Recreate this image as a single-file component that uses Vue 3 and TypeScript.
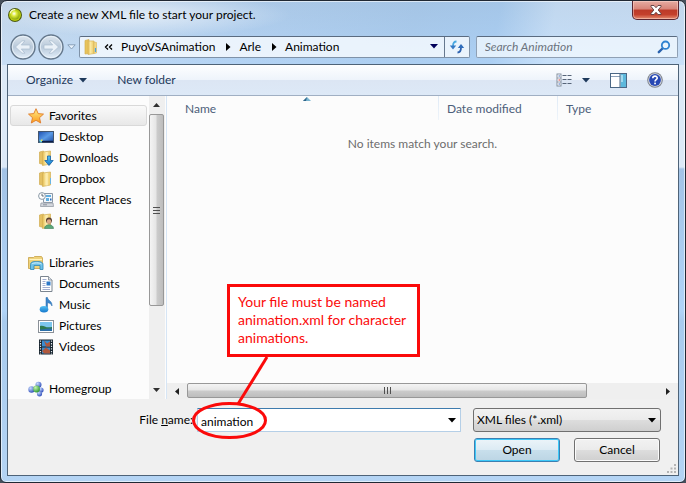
<script setup lang="ts">
import { ref } from 'vue'

interface NavItem {
  label: string
  icon: string
}
interface NavGroup extends NavItem {
  selected?: boolean
  items: NavItem[]
}

const groups: NavGroup[] = [
  {
    label: 'Favorites',
    icon: 'star',
    selected: true,
    items: [
      { label: 'Desktop', icon: 'desktop' },
      { label: 'Downloads', icon: 'downloads' },
      { label: 'Dropbox', icon: 'folder' },
      { label: 'Recent Places', icon: 'recent' },
      { label: 'Hernan', icon: 'user' },
    ],
  },
  {
    label: 'Libraries',
    icon: 'libraries',
    items: [
      { label: 'Documents', icon: 'document' },
      { label: 'Music', icon: 'music' },
      { label: 'Pictures', icon: 'picture' },
      { label: 'Videos', icon: 'video' },
    ],
  },
  { label: 'Homegroup', icon: 'homegroup', items: [] },
]

const path = ['PuyoVSAnimation', 'Arle', 'Animation']
const fileName = ref('animation')
const search = ref('')
const fileType = ref('xml')
</script>

<template>
  <div class="window">
    <svg class="defs" width="0" height="0" aria-hidden="true">
      <defs>
        <linearGradient id="gold" x1="0" x2="1">
          <stop offset="0" stop-color="#e3b94c" />
          <stop offset="0.4" stop-color="#fbe9a4" />
          <stop offset="1" stop-color="#ecc964" />
        </linearGradient>
        <linearGradient id="screen" x1="0" y1="0" x2="1" y2="1">
          <stop offset="0" stop-color="#1d4fb0" />
          <stop offset="0.5" stop-color="#5b9be6" />
          <stop offset="1" stop-color="#1a48a0" />
        </linearGradient>
        <linearGradient id="blue" x1="0" y1="0" x2="0" y2="1">
          <stop offset="0" stop-color="#52c0f4" />
          <stop offset="1" stop-color="#1678cc" />
        </linearGradient>
        <linearGradient id="starfill" x1="0" y1="0" x2="0" y2="1">
          <stop offset="0" stop-color="#fff08a" />
          <stop offset="1" stop-color="#fb9a1c" />
        </linearGradient>
        <radialGradient id="orb" cx="0.4" cy="0.35" r="0.8">
          <stop offset="0" stop-color="#ffffff" />
          <stop offset="0.35" stop-color="#dcea3a" />
          <stop offset="1" stop-color="#6c8a00" />
        </radialGradient>
        <radialGradient id="ballblue" cx="0.35" cy="0.3" r="0.8">
          <stop offset="0" stop-color="#c8dcff" />
          <stop offset="1" stop-color="#2342b4" />
        </radialGradient>
        <radialGradient id="ballgreen" cx="0.35" cy="0.3" r="0.8">
          <stop offset="0" stop-color="#c4f6b0" />
          <stop offset="1" stop-color="#1f8f28" />
        </radialGradient>
        <linearGradient id="glass" x1="0" y1="0" x2="0" y2="1">
          <stop offset="0" stop-color="#dfe7ef" />
          <stop offset="0.5" stop-color="#b9c9da" />
          <stop offset="1" stop-color="#e4f0fb" />
        </linearGradient>
      </defs>
    </svg>

    <header class="titlebar">
      <svg class="app-icon" width="16" height="16" viewBox="0 0 16 16">
        <circle cx="8" cy="8" r="7" fill="#4c5a10" />
        <circle cx="8" cy="8" r="6" fill="#b8cc10" />
        <circle cx="8" cy="8" r="4.6" fill="url(#orb)" />
        <path d="M3.2 6.4a5 5 0 0 1 5-3.7" fill="none" stroke="#f6fbd0" stroke-width="1.3" />
      </svg>
      <h1 class="title">Create a new XML file to start your project.</h1>
      <button class="close" type="button" aria-label="Close">
        <svg width="12" height="10" viewBox="0 0 12 10">
          <path d="M1 .5h3L6 2.700 8 .5h3v1L8.200 5 11 8.500v1H8L6 7.300 4 9.500H1v-1L3.800 5 1 1.500z" fill="#fff" stroke="#5a3a3c" stroke-width="0.9" />
        </svg>
      </button>
    </header>

    <nav class="addressrow" aria-label="Location">
      <div class="history">
        <button class="round" type="button" aria-label="Back">
          <svg width="26" height="26" viewBox="0 0 26 26">
            <circle cx="13" cy="13" r="12" fill="url(#glass)" stroke="#65788c" stroke-width="1.4" />
            <circle cx="13" cy="13" r="10.7" fill="none" stroke="#eef5fb" stroke-opacity="0.8" />
            <path d="M5.500 13 12 6.800h3L11.300 11H20v4h-8.700l3.700 4.200h-3z" fill="#eaf1f8" stroke="#a9bccf" stroke-width="0.7" />
          </svg>
        </button>
        <button class="round" type="button" aria-label="Forward">
          <svg width="26" height="26" viewBox="0 0 26 26">
            <circle cx="13" cy="13" r="12" fill="url(#glass)" stroke="#65788c" stroke-width="1.4" />
            <circle cx="13" cy="13" r="10.7" fill="none" stroke="#eef5fb" stroke-opacity="0.8" />
            <path d="M20.500 13 14 6.800h-3l3.700 4.200H6v4h8.700L11 19.200h3z" fill="#eaf1f8" stroke="#a9bccf" stroke-width="0.7" />
          </svg>
        </button>
        <button class="recent" type="button" aria-label="Recent locations">
          <svg width="9" height="6" viewBox="0 0 9 6"><path d="M.8.8h7.400L4.500 5z" fill="#e8f2fc" stroke="#8198b2" stroke-width="0.9" /></svg>
        </button>
      </div>
      <div class="address">
        <svg width="16" height="16" viewBox="0 0 16 16">
          <path d="M2 1.500 6 .5v14l-4 .5z" fill="#e8c35a" stroke="#d4b052" stroke-width="0.7" />
          <path d="M5 2h6v12.500l-6 1z" fill="url(#gold)" stroke="#d8b65c" stroke-width="0.7" />
          <path d="M11 3l2.500.5V14L11 14.500z" fill="#f2d783" stroke="#d8b65c" stroke-width="0.6" />
          <path d="M12.500 9v4" stroke="#4aa0e0" stroke-width="1.2" />
        </svg>
        <svg class="chevrons" width="9" height="6" viewBox="0 0 9 6"><path d="M4 .5 1.500 3 4 5.500M8 .5 5.500 3 8 5.500" fill="none" stroke="#000" stroke-width="1.3" /></svg>
        <template v-for="(part, i) in path" :key="part">
          <svg v-if="i > 0" class="sep" width="5" height="8" viewBox="0 0 5 8"><path d="M0 0l4.500 4L0 8z" fill="#000" /></svg>
          <a class="crumb" href="#">{{ part }}</a>
        </template>
        <button class="plain drop" type="button" aria-label="Previous locations">
          <svg width="8" height="5" viewBox="0 0 8 5"><path d="M0 0h8L4 4.500z" fill="#00005a" /></svg>
        </button>
        <button class="plain refresh" type="button" aria-label="Refresh">
          <svg width="16" height="16" viewBox="0 0 16 16">
            <path d="M7.500 2.500C5 2.500 4 4 4 7.500" fill="none" stroke="#48a8e0" stroke-width="1.8" />
            <path d="M.8 6.500h6.400L4 10.500z" fill="#3579c4" />
            <path d="M8.500 13.500c2.500 0 3.500-1.500 3.500-5" fill="none" stroke="#2d62b0" stroke-width="1.8" />
            <path d="M8.800 9h6.400L12 5z" fill="#2f6dbb" />
          </svg>
        </button>
      </div>
      <div class="search">
        <input v-model="search" type="text" placeholder="Search Animation" aria-label="Search Animation" />
        <svg width="14" height="14" viewBox="0 0 14 14">
          <path d="M6 8 1.800 12.200" stroke="#2a62ae" stroke-width="2.4" stroke-linecap="round" />
          <circle cx="8.500" cy="5.200" r="3.700" fill="#eaf4fc" stroke="#2f82d0" stroke-width="1.8" />
        </svg>
      </div>
    </nav>

    <main class="client">
      <div class="toolbar">
        <button class="tool" type="button">
          Organize
          <svg width="8" height="5" viewBox="0 0 8 5"><path d="M0 0h8L4 4.500z" fill="#1e395b" /></svg>
        </button>
        <button class="tool" type="button">New folder</button>
        <span class="spacer"></span>
        <button class="plain views" type="button" aria-label="Change your view">
          <svg width="16" height="14" viewBox="0 0 16 14">
            <rect x="1" y="1" width="4" height="12" fill="#fff" stroke="#7b8899" stroke-width="0.9" />
            <path d="M1 5h4M1 9h4" stroke="#7b8899" stroke-width="0.8" />
            <path d="M2.500 3h1.500M2.500 11h1.500" stroke="#3d6ac0" stroke-width="1.2" />
            <path d="M2.500 7h1.500" stroke="#d03030" stroke-width="1.2" />
            <path d="M6.500 2.500h4M11.500 2.500h4M6.500 6.500h4M11.500 6.500h4M6.500 10.500h4M11.500 10.500h4" stroke="#566478" />
          </svg>
          <svg width="8" height="5" viewBox="0 0 8 5"><path d="M0 0h8L4 4.500z" fill="#1e395b" /></svg>
        </button>
        <button class="plain" type="button" aria-label="Show the preview pane">
          <svg width="17" height="15" viewBox="0 0 17 15">
            <rect x=".5" y=".5" width="16" height="14" fill="#fff" stroke="#4b6785" />
            <path d="M1 3.500h9" stroke="#8ba0b8" />
            <rect x="10.500" y="1" width="5.500" height="13" fill="#5cb8dc" />
            <path d="M10 1v13" stroke="#4b6785" />
            <path d="M12 2v7" stroke="#b8e6f6" stroke-width="1.5" />
          </svg>
        </button>
        <button class="plain" type="button" aria-label="Get help">
          <svg width="16" height="16" viewBox="0 0 16 16">
            <circle cx="8" cy="8" r="7.800" fill="#7d828c" />
            <circle cx="8" cy="8" r="6.800" fill="#d5d9e2" />
            <circle cx="8" cy="8" r="5.900" fill="#2748b4" />
            <path d="M5.800 6.200C5.800 3.400 10.300 3.500 10.200 6.100 10.100 7.700 8 7.700 8 9.500" fill="none" stroke="#fff" stroke-width="1.6" />
            <rect x="7.200" y="10.600" width="1.700" height="1.700" fill="#fff" />
          </svg>
        </button>
      </div>

      <div class="panes">
        <aside class="navpane">
          <section v-for="g in groups" :key="g.label" class="group">
            <template v-for="(item, i) in [g, ...g.items]" :key="item.label">
              <a href="#" class="node" :class="{ child: i > 0, selected: i === 0 && g.selected }">
                <svg width="16" height="16" viewBox="0 0 16 16">
                  <path v-if="item.icon === 'star'" d="M8 .7l2.200 4.900 5.300.5-4 3.600 1.200 5.300L8 12.300 3.300 15l1.200-5.300-4-3.600 5.300-.5z" fill="url(#starfill)" stroke="#e07a28" stroke-width="0.9" />
                  <g v-else-if="item.icon === 'desktop'">
                    <rect x="0.500" y="2.500" width="15" height="11" fill="url(#screen)" stroke="#44566e" />
                    <path d="M1 12.500h14" stroke="#0c1e48" stroke-width="1.5" />
                    <path d="M1.500 11h2.500v2.500H1.500z" fill="#6ad0d8" />
                    <path d="M3 10.500h1.500v1.500H3z" fill="#e8e050" />
                  </g>
                  <g v-else-if="item.icon === 'downloads' || item.icon === 'folder' || item.icon === 'user'">
                    <path d="M1.500 2 5.500 1v13.500l-4-1z" fill="#e4c062" stroke="#d0ac50" stroke-width="0.7" />
                    <path d="M4.500 2 12.500 1v13l-8 1.500z" fill="url(#gold)" stroke="#d2b058" stroke-width="0.7" />
                    <path d="M9 2v12.500" stroke="#fff4c4" />
                    <path v-if="item.icon === 'folder'" d="M12.500 7v6" stroke="#6ab4e4" />
                    <path v-if="item.icon === 'downloads'" d="M9.500 6h3v4.500h2.700L11 15.500 6.800 10.500h2.700z" fill="url(#blue)" stroke="#1562a8" stroke-width="0.8" />
                    <g v-if="item.icon === 'user'">
                      <path d="M6.500 15.500c0-5 9-5 9 0z" fill="#5ba878" stroke="#3a7a58" stroke-width="0.6" />
                      <circle cx="11" cy="7.500" r="3" fill="#5a4030" />
                      <circle cx="11" cy="8.500" r="2.200" fill="#dca888" />
                    </g>
                  </g>
                  <g v-else-if="item.icon === 'recent'">
                    <path d="M5.500 1.500h9v9h-9z" fill="#f2f7fc" stroke="#8c98a6" />
                    <path d="M8 3h5v2H8zM8 6h3v3H8z" fill="#62aee0" />
                    <path d="M12 6.500h1.500v2H12z" fill="#2c6cb8" />
                    <path d="M3 11h12l.5 3.500h-13z" fill="#d2d6dc" stroke="#959ca6" stroke-width="0.8" />
                    <path d="M5 12.800h4" stroke="#7a828e" stroke-width="0.8" />
                    <circle cx="4" cy="4" r="3.400" fill="#fff" stroke="#7d8d9c" stroke-width="0.9" />
                    <path d="M4 1.800V4h1.800" fill="none" stroke="#3c4a58" stroke-width="0.8" />
                  </g>
                  <g v-else-if="item.icon === 'libraries'">
                    <path d="M.5 2.500h5l1-1h7l1 1.500v10.500H.5z" fill="#efd27a" stroke="#c8a246" stroke-width="0.8" />
                    <path d="M1.500 4.500h12.500" stroke="#fff3bc" />
                    <path d="M2.500 14.500V9.500C2.500 7 5 6.500 8.500 6.500s6.500.5 6.500 3v5h-3v-4H6v4z" fill="#6fc2e8" stroke="#2c86b8" stroke-width="0.8" />
                    <path d="M4 9c1-1.500 8-1.500 9.500 0" fill="none" stroke="#d8f4ff" />
                  </g>
                  <g v-else-if="item.icon === 'document'">
                    <path d="M2.500.5h8l3.500 3.500v11.500H2.500z" fill="#fff" stroke="#7b8590" />
                    <path d="M10.500.5V4H14" fill="#dde4ec" stroke="#7b8590" stroke-width="0.8" />
                    <path d="M4.500 3.500h4M4.500 5.500h3M4.500 7.500h3M4.500 9.500h3M4.500 11.500h7.500M4.500 13.500h7.500" stroke="#a2aed0" />
                    <rect x="8.500" y="5.500" width="4" height="4" fill="#2c78c8" />
                  </g>
                  <g v-else-if="item.icon === 'music'">
                    <path d="M8 .5h1.500c.3 3 5 3.500 4.500 8.500-1-2.500-2.500-3-4.500-3.200V12H8z" fill="#3a86cc" stroke="#2466a8" stroke-width="0.5" />
                    <ellipse cx="6" cy="12.300" rx="4.300" ry="3.200" fill="url(#blue)" />
                  </g>
                  <g v-else-if="item.icon === 'picture'">
                    <rect x=".5" y="2.500" width="15" height="12" fill="#fff" stroke="#8a9098" />
                    <rect x="2" y="4" width="12" height="9" fill="#7cc6ee" />
                    <path d="M2 8c4-1.500 5 2.500 12 1v4H2z" fill="#2c7a50" />
                    <path d="M2 11.500c5-.5 8-1 12-1v2.500H2z" fill="#2a6ea8" />
                  </g>
                  <g v-else-if="item.icon === 'video'">
                    <rect x="1" y=".5" width="14" height="15" fill="#18242e" />
                    <path d="M2.500 1.500v14M13.500 1.500v14" stroke="#e0e8ee" stroke-width="1.2" stroke-dasharray="1.3 1.3" />
                    <rect x="4" y="1.500" width="8" height="6" fill="#3a8cd0" />
                    <rect x="4" y="8.500" width="8" height="6" fill="#3a8cd0" />
                    <path d="M6 1.500l3 3 3-2v5H8zM4 12l4-3.500 4 3v3H6z" fill="#b0583c" />
                  </g>
                  <g v-else>
                    <circle cx="10.500" cy="3.800" r="3" fill="url(#ballblue)" />
                    <circle cx="3.500" cy="8.500" r="3.200" fill="url(#ballblue)" />
                    <circle cx="13" cy="9" r="2.600" fill="url(#ballblue)" />
                    <circle cx="11.500" cy="12.800" r="2.600" fill="url(#ballblue)" />
                    <circle cx="8.500" cy="8" r="3.400" fill="url(#ballgreen)" />
                  </g>
                </svg>
                <span>{{ item.label }}</span>
              </a>
            </template>
          </section>
        </aside>

        <div class="vscroll" aria-hidden="true">
          <span class="arrow"><svg width="7" height="4" viewBox="0 0 7 4"><path d="M3.500 0 7 4H0z" fill="#303030" /></svg></span>
          <div class="vthumb"><i></i><i></i><i></i></div>
          <span class="arrow"><svg width="7" height="4" viewBox="0 0 7 4"><path d="M3.500 4 7 0H0z" fill="#303030" /></svg></span>
        </div>

        <section class="listpane">
          <table class="files">
            <thead>
              <tr>
                <th class="col-name" aria-sort="ascending">
                  Name
                  <svg class="sort" width="8" height="4" viewBox="0 0 8 4"><path d="M4 0l4 4H0z" fill="#79b4d0" /><path d="M4 0L0 4h3z" fill="#2f6488" /></svg>
                </th>
                <th class="col-date">Date modified</th>
                <th>Type</th>
              </tr>
            </thead>
            <tbody>
              <tr><td colspan="3">No items match your search.</td></tr>
            </tbody>
          </table>
          <div class="hscroll" aria-hidden="true">
            <span class="arrow"><svg width="4" height="7" viewBox="0 0 4 7"><path d="M0 3.500 4 0v7z" fill="#202020" /></svg></span>
            <div class="track"><div class="hthumb"><i></i><i></i><i></i></div></div>
            <span class="arrow"><svg width="4" height="7" viewBox="0 0 4 7"><path d="M4 3.500 0 0v7z" fill="#202020" /></svg></span>
          </div>
        </section>
      </div>

      <form class="footer" @submit.prevent>
        <div class="filerow">
          <label class="filelabel" for="filename">File <u>n</u>ame:</label>
          <div class="filefield">
            <input id="filename" v-model="fileName" type="text" autocomplete="off" />
            <svg class="combo" width="8" height="5" viewBox="0 0 8 5"><path d="M0 0h8L4 4.500z" fill="#000" /></svg>
            <p class="note">Your file must be named animation.xml for character animations.</p>
            <svg class="marker" width="84" height="86" viewBox="0 0 84 86">
              <path d="M75 3 46 50" stroke="#fb0a0a" stroke-width="3" />
              <ellipse cx="37.500" cy="66.500" rx="36" ry="17" fill="none" stroke="#fb0a0a" stroke-width="3" />
            </svg>
          </div>
          <div class="typefield">
            <select v-model="fileType" aria-label="File type">
              <option value="xml">XML files (*.xml)</option>
            </select>
            <svg class="combo" width="8" height="5" viewBox="0 0 8 5"><path d="M0 0h8L4 4.500z" fill="#000" /></svg>
          </div>
        </div>
        <div class="actions">
          <button class="push primary" type="submit">Open</button>
          <button class="push" type="button">Cancel</button>
        </div>
        <svg class="grip" width="10" height="10" viewBox="0 0 10 10" aria-hidden="true">
          <path d="M7 1h2M7 4.500h2M7 8h2M3.500 4.500h2M3.500 8h2M0 8h2" stroke="#b4b4b4" stroke-width="2" />
        </svg>
      </form>
    </main>
  </div>
</template>

<style>
body {
  margin: 0;
  background: #47505c;
}
</style>

<style scoped>
* {
  box-sizing: border-box;
}
.window {
  display: flex;
  flex-direction: column;
  min-height: 100vh;
  padding: 0 6px 6px;
  border: 1px solid #202833;
  border-radius: 7px 7px 6px 6px;
  font: 12px/16px Lato, "Open Sans", sans-serif;
  color: #000;
  background:
    radial-gradient(ellipse 150px 22px at 140px 14px, rgba(255, 255, 255, 0.6), transparent),
    linear-gradient(180deg, rgba(150, 175, 200, 0.25), rgba(180, 215, 250, 0.3)) 0 0 / 100% 64px no-repeat,
    linear-gradient(100deg, #d2e2f3, #b4d2f2 34%, #a9cbee 60%, #a9cdf2 72%, #cfe4fa 80%, #d2e4f8) 0 0 / 100% 64px no-repeat,
    linear-gradient(180deg, #dce9f7 0, #dce9f7 166px, #a3c3e6 168px, #b0d4f8 310px, #a8cbee 320px, #b4d4f4);
  box-shadow: inset 0 0 0 1px rgba(255, 255, 255, 0.6);
}
.defs {
  position: absolute;
}
svg {
  flex: none;
  display: block;
}
button {
  font: inherit;
  color: inherit;
  padding: 0;
  margin: 0;
}
a {
  color: inherit;
  text-decoration: none;
}

.titlebar {
  display: flex;
  align-items: center;
  gap: 6px;
  height: 28px;
}
.title {
  flex: 1;
  margin: 0;
  font-size: 12px;
  font-weight: 400;
}
.close {
  align-self: flex-start;
  display: flex;
  align-items: center;
  justify-content: center;
  width: 47px;
  height: 19px;
  border: 1px solid #5a2630;
  border-top: 0;
  border-radius: 0 0 5px 5px;
  background: linear-gradient(#e6aca2, #d88478 45%, #bc3a28 50%, #c4402c 75%, #e48c70);
  box-shadow: inset 0 0 0 1px rgba(255, 220, 210, 0.5);
}

.addressrow {
  display: flex;
  align-items: center;
  gap: 6px;
  height: 35px;
  padding-right: 1px;
}
.history {
  display: flex;
  align-items: center;
  gap: 2px;
  margin-left: 3px;
  width: 63px;
}
.round,
.recent,
.plain {
  border: 0;
  background: none;
}
.recent {
  margin-left: 1px;
}
.address {
  flex: 385;
  display: flex;
  align-items: center;
  height: 22px;
  padding-left: 3px;
  border: 1px solid #7f92a8;
  border-top-color: #5a6b80;
  border-radius: 2px;
  background: rgba(244, 249, 254, 0.85);
}
.chevrons {
  margin: 0 8px 0 5px;
}
.sep {
  margin: 0 8px 0 11px;
}
.drop {
  margin-left: auto;
  padding: 8px 6px;
}
.refresh {
  display: flex;
  align-items: center;
  height: 20px;
  padding: 0 4px;
  border-left: 1px solid #66788e;
}
.search {
  flex: 186;
  min-width: 0;
  display: flex;
  align-items: center;
  height: 22px;
  padding: 0 6px 0 8px;
  border: 1px solid #8fa0b4;
  border-top-color: #5a6b80;
  border-radius: 2px;
  background: rgba(240, 247, 254, 0.8);
}
.search input {
  flex: 1;
  min-width: 0;
  padding: 0;
  border: 0;
  outline: 0;
  background: none;
  font: inherit;
}
.search input::placeholder {
  color: #6c747e;
  font-style: italic;
  opacity: 1;
}

.client {
  flex: 1;
  display: flex;
  flex-direction: column;
  border: 1px solid #4e6378;
  background: #f0f0f0;
}
.toolbar {
  display: flex;
  align-items: center;
  height: 31px;
  padding: 0 15px 0 18px;
  gap: 20px;
  border-bottom: 1px solid #a0afc3;
  background: linear-gradient(#fdfeff, #eef4fb 49%, #dce6f4 51%, #dde9f7);
  color: #1e395b;
}
.tool {
  display: flex;
  align-items: center;
  gap: 6px;
  margin-right: 10px;
  border: 0;
  background: none;
}
.spacer {
  flex: 1;
}
.views {
  display: flex;
  align-items: center;
  gap: 10px;
}

.panes {
  flex: 1;
  display: flex;
  background: #fcfcfc;
}
.navpane {
  width: 141px;
  padding: 9px 2px 0;
}
.group + .group {
  margin-top: 21px;
}
.node {
  display: flex;
  align-items: center;
  gap: 5px;
  height: 21px;
  padding-left: 17px;
  border: 1px solid transparent;
  border-radius: 3px;
}
.node.child {
  padding-left: 27px;
}
.node.selected {
  border-color: #d9d9d9;
  background: linear-gradient(#fafafa, #e8e8e8);
}
.vscroll {
  display: flex;
  flex-direction: column;
  width: 16px;
  background: #efefef;
}
.arrow {
  display: flex;
  align-items: center;
  justify-content: center;
  flex: none;
  width: 15px;
  height: 18px;
}
.vthumb {
  flex: none;
  display: flex;
  flex-direction: column;
  align-items: center;
  justify-content: center;
  gap: 2px;
  width: 15px;
  height: 192px;
  margin-bottom: auto;
  border: 1px solid #989898;
  border-radius: 2px;
  background: linear-gradient(90deg, #f4f4f4, #e6e6e6 45%, #cbcbcb 55%, #bdbdbd);
}
.vthumb i {
  width: 7px;
  height: 1px;
  background: #505050;
}

.listpane {
  flex: 1;
  min-width: 0;
  display: flex;
  flex-direction: column;
  margin-left: 1px;
  border-left: 1px solid #d6e5f5;
}
.files {
  width: 100%;
  border-collapse: collapse;
  table-layout: fixed;
}
.files th {
  position: relative;
  height: 24px;
  padding: 2px 0 0 8px;
  font-weight: 400;
  text-align: left;
  color: #4c607a;
  background: linear-gradient(#dfeaf6, #eef4fa) 100% 0 / 1px 100% no-repeat;
}
.files .col-name {
  width: 272px;
  padding-left: 18px;
}
.files .col-date {
  width: 119px;
}
.files th:last-child {
  background: none;
}
.sort {
  position: absolute;
  top: 1px;
  left: 50%;
}
.files td {
  height: 48px;
  padding: 0;
  text-align: center;
  color: #6d6d6d;
}
.hscroll {
  display: flex;
  height: 16px;
  margin-top: auto;
  background: #efefef;
}
.hscroll .arrow {
  width: 20px;
  height: 16px;
}
.track {
  flex: 1;
}
.hthumb {
  display: flex;
  align-items: center;
  justify-content: center;
  gap: 2px;
  width: 85%;
  height: 15px;
  border: 1px solid #989898;
  border-radius: 2px;
  background: linear-gradient(#f4f4f4, #e6e6e6 45%, #cbcbcb 55%, #bdbdbd);
}
.hthumb i {
  width: 1px;
  height: 7px;
  background: #505050;
}

.footer {
  position: relative;
  padding: 9px 17px 13px 0;
}
.filerow {
  display: flex;
  gap: 12px;
}
.filelabel {
  width: 185px;
  margin-right: -8px;
  line-height: 24px;
  text-align: right;
}
.filefield {
  position: relative;
  flex: 264;
}
.typefield {
  position: relative;
  flex: 188;
}
.filefield input {
  display: block;
  width: 100%;
  height: 24px;
  padding: 2px 20px 0 3px;
  border: 1px solid #b5cfe7;
  border-top-color: #3d7bad;
  border-radius: 1px;
  outline: 0;
  font: inherit;
  background: #fff;
}
.typefield select {
  appearance: none;
  display: block;
  width: 100%;
  height: 24px;
  padding: 0 20px 0 3px;
  border: 1px solid #707070;
  border-radius: 3px;
  font: inherit;
  color: #000;
  background: linear-gradient(#f2f2f2, #ebebeb 49%, #dddddd 51%, #cfcfcf);
}
.combo {
  position: absolute;
  top: 10px;
  right: 5px;
  pointer-events: none;
}
.note {
  position: absolute;
  left: 30px;
  bottom: 75px;
  width: 193px;
  margin: 0;
  padding: 6px 8px 7px;
  border: 3px solid #fb0a0a;
  background: #fff;
  color: #fb0a0a;
  font-size: 14px;
  line-height: 18px;
}
.marker {
  position: absolute;
  left: -5px;
  bottom: -8px;
  pointer-events: none;
}
.actions {
  display: flex;
  justify-content: flex-end;
  gap: 14px;
  margin-top: 6px;
  padding-right: 1px;
}
.push {
  width: 86px;
  height: 24px;
  border: 1px solid #707070;
  border-radius: 3px;
  background: linear-gradient(#f2f2f2, #ebebeb 49%, #dddddd 51%, #cfcfcf);
  box-shadow: inset 0 0 0 1px #fbfbfb;
}
.primary {
  border-color: #3c7fb1;
  background: linear-gradient(#ecf4f9, #dcebf4 49%, #c8dfec 51%, #bcd5e4);
  box-shadow: inset 0 0 0 1px #3cc8f8;
}
.grip {
  position: absolute;
  right: 1px;
  bottom: 1px;
}
</style>
